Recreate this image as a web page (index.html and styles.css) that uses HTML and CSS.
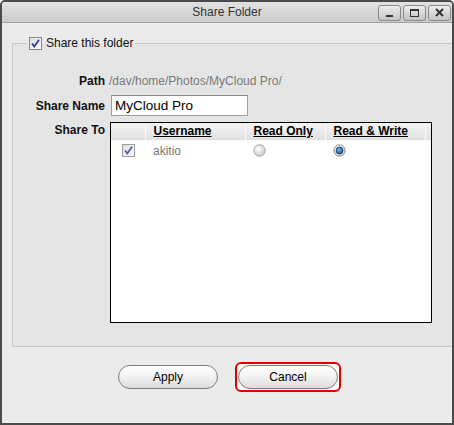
FILE: index.html
```html
<!DOCTYPE html>
<html>
<head>
<meta charset="utf-8">
<link rel="stylesheet" href="styles.css">
</head>
<body>
<div class="window">
  <div class="titlebar">
    <div></div>
    <div class="title">Share Folder</div>
    <div class="tb-buttons">
      <span class="tb-btn"><svg width="23" height="16" viewBox="0 0 23 16"><rect x="8" y="10" width="7" height="2" fill="#333"/></svg></span>
      <span class="tb-btn"><svg width="23" height="16" viewBox="0 0 23 16"><rect x="7.5" y="4.5" width="8" height="7" fill="none" stroke="#333" stroke-width="1"/><rect x="7" y="4" width="9" height="2" fill="#333"/></svg></span>
      <span class="tb-btn"><svg width="23" height="16" viewBox="0 0 23 16"><path d="M8 4 L15 11 M15 4 L8 11" stroke="#333" stroke-width="2" fill="none"/></svg></span>
    </div>
  </div>
  <div class="content">
    <fieldset class="group">
      <legend class="legend">
        <svg class="cb" width="13" height="13" viewBox="0 0 13 13"><defs><linearGradient id="cbg" x1="0" y1="0" x2="1" y2="1"><stop offset="0" stop-color="#dcdcdc"/><stop offset="1" stop-color="#ffffff"/></linearGradient></defs><rect x="0.5" y="0.5" width="12" height="12" fill="url(#cbg)" stroke="#8a8a8a"/><path d="M3 6.5 L5.3 9.5 L10 2.8" fill="none" stroke="#22409a" stroke-width="1.8"/></svg>
        <span>Share this folder</span>
      </legend>
      <div class="form">
        <div class="label">Path</div>
        <div class="path">/dav/home/Photos/MyCloud Pro/</div>
        <div class="label">Share Name</div>
        <div><input class="name" type="text" value="MyCloud Pro"></div>
        <div class="label top">Share To</div>
        <div class="gridbox">
          <table class="users">
            <colgroup><col class="c1"><col class="c2"><col class="c3"><col class="c4"><col class="c5"></colgroup>
            <thead>
              <tr><th></th><th><u>Username</u></th><th><u>Read Only</u></th><th><u>Read &amp; Write</u></th><th></th></tr>
            </thead>
            <tbody>
              <tr>
                <td class="center"><svg class="cb" width="13" height="13" viewBox="0 0 13 13"><defs><linearGradient id="cbg2" x1="0" y1="0" x2="1" y2="1"><stop offset="0" stop-color="#dedede"/><stop offset="1" stop-color="#fafafa"/></linearGradient></defs><rect x="0.5" y="0.5" width="12" height="12" fill="url(#cbg2)" stroke="#9a9a9a"/><path d="M3 6.5 L5.3 9.5 L10 2.8" fill="none" stroke="#4a62a8" stroke-width="1.8"/></svg></td>
                <td class="user">akitio</td>
                <td><svg class="radio" width="13" height="13" viewBox="0 0 13 13"><defs><radialGradient id="rg" cx="0.4" cy="0.35" r="0.7"><stop offset="0" stop-color="#ffffff"/><stop offset="1" stop-color="#c8c8c8"/></radialGradient></defs><circle cx="6.5" cy="6.5" r="5.7" fill="url(#rg)" stroke="#a3a3a3"/></svg></td>
                <td><svg class="radio" width="13" height="13" viewBox="0 0 13 13"><defs><radialGradient id="rg2" cx="0.4" cy="0.35" r="0.7"><stop offset="0" stop-color="#ffffff"/><stop offset="1" stop-color="#c8c8c8"/></radialGradient><radialGradient id="dot" cx="0.4" cy="0.35" r="0.7"><stop offset="0" stop-color="#6fb2ee"/><stop offset="1" stop-color="#115ea8"/></radialGradient></defs><circle cx="6.5" cy="6.5" r="5.7" fill="url(#rg2)" stroke="#8f8f8f"/><circle cx="6.5" cy="6.5" r="3.4" fill="url(#dot)" stroke="#1b3b5e" stroke-width="0.9"/></svg></td>
                <td></td>
              </tr>
              <tr class="filler"><td colspan="5"></td></tr>
            </tbody>
          </table>
        </div>
      </div>
    </fieldset>
    <div class="actions">
      <button class="btn" type="button">Apply</button>
      <span class="highlight"><button class="btn" type="button">Cancel</button></span>
    </div>
  </div>
</div>
</body>
</html>
```

FILE: styles.css
```css
html, body {
  margin: 0;
  padding: 0;
  background: #ffffff;
}

body {
  font-family: "Liberation Sans", Arial, sans-serif;
  font-size: 12px;
  color: #000;
}

.window {
  width: 454px;
  height: 425px;
  box-sizing: border-box;
  border: 2px solid #4b4b4b;
  border-radius: 5px 5px 0 0;
  background: #ebebeb;
  overflow: hidden;
  display: flex;
  flex-direction: column;
}

.titlebar {
  height: 20px;
  border-bottom: 1px solid #a2a2a2;
  background: linear-gradient(#e2e2e2, #cbcbcb);
  display: grid;
  grid-template-columns: 1fr auto 1fr;
  align-items: center;
}

.title {
  color: #333;
  font-size: 12px;
  line-height: 16px;
}

.tb-buttons {
  justify-self: end;
  display: flex;
  gap: 2px;
  padding-right: 1px;
  margin-top: 1px;
}

.tb-btn {
  display: block;
  width: 23px;
  height: 16px;
  box-sizing: border-box;
  border: 1px solid #8a8a8a;
  border-radius: 3px;
  background: linear-gradient(#ececec, #c4c4c4);
  overflow: hidden;
}

.tb-btn svg {
  display: block;
  margin: -1px 0 0 -1px;
}

.content {
  flex: 1;
  display: flex;
  flex-direction: column;
}

.group {
  margin: 13px -20px 0 10px;
  padding: 0 0 23px 0;
  border: 1px solid #c9c9c9;
  background: #e5e5e5;
  min-width: 0;
}

.legend {
  margin-left: 14px;
  padding: 0 2px;
  display: flex;
  align-items: center;
  gap: 4px;
  line-height: 14px;
  color: #111;
}

.cb {
  display: block;
}

.form {
  display: grid;
  grid-template-columns: 92px auto;
  column-gap: 5px;
  row-gap: 6px;
  padding-top: 23px;
  align-items: center;
}

.label {
  font-weight: bold;
  text-align: right;
  color: #111;
}

.label.top {
  align-self: start;
  padding-top: 1px;
}

.path {
  color: #7a7a7a;
  margin-left: -1px;
  line-height: 16px;
}

.name {
  display: block;
  margin: 0 0 0 1px;
  width: 137px;
  height: 21px;
  box-sizing: border-box;
  border: 1px solid #a0a0a0;
  border-top-color: #8a8a8a;
  padding: 0 3px;
  font-family: "Liberation Sans", Arial, sans-serif;
  font-size: 13.5px;
  color: #000;
  background: #fff;
}

.gridbox {
  width: 322px;
  height: 201px;
  box-sizing: border-box;
  border: 1px solid #000;
  background: #fff;
}

.users {
  width: 320px;
  border-collapse: collapse;
  table-layout: fixed;
}

.c1 { width: 34px; }
.c2 { width: 100px; }
.c3 { width: 80px; }
.c4 { width: 100px; }
.c5 { width: 6px; }

.users th {
  height: 17px;
  padding: 0 0 0 8px;
  text-align: left;
  font-weight: bold;
  color: #000;
  background: linear-gradient(#f4f4f4, #e0e0e0);
  border-right: 1px solid #fbfbfb;
  border-bottom: 1px solid #fbfbfb;
  white-space: nowrap;
  line-height: 15px;
}

.users th:last-child {
  border-right: none;
}

.users td {
  height: 19px;
  padding: 0 0 0 8px;
  vertical-align: middle;
}

.users td.center {
  padding: 0;
}

.users td.center .cb {
  margin: 0 auto;
}

.users .user {
  color: #777;
}

.radio {
  display: block;
}

.actions {
  display: flex;
  align-items: center;
  gap: 17px;
  padding-left: 116px;
  margin-top: 15px;
}

.btn {
  width: 100px;
  height: 24px;
  box-sizing: border-box;
  border: 1px solid #7c7c7c;
  border-radius: 12px;
  background: linear-gradient(#ffffff 0%, #f3f3f3 45%, #dcdcdc 100%);
  font-family: "Liberation Sans", Arial, sans-serif;
  font-size: 12px;
  color: #000;
  padding: 0;
  display: block;
}

.highlight {
  display: block;
  border: 2px solid #e00000;
  border-radius: 6px;
  padding: 1px;
  background: #fff;
}
```
